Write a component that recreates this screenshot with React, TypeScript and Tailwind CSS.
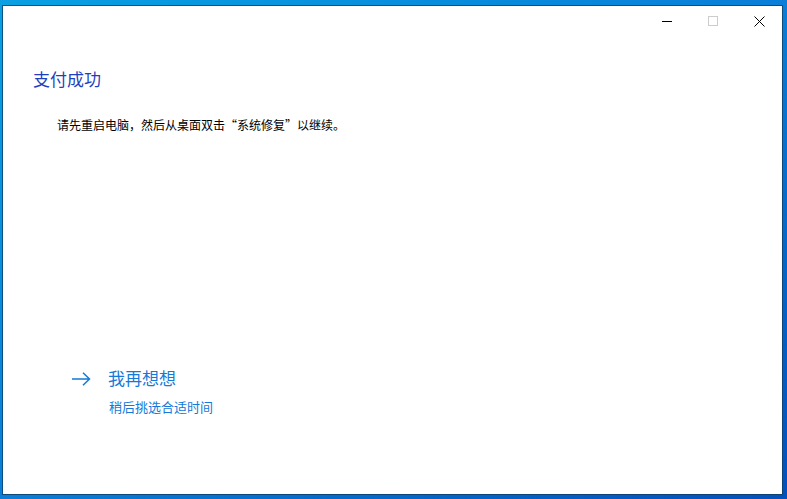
const cjk = { fontFamily: '"Noto Sans CJK SC", "Noto Sans", sans-serif' };

export default function App() {
  return (
    <div
      className="w-[787px] h-[499px] overflow-hidden bg-gradient-to-br from-[#0aa0e2] via-[#0a7ed8] to-[#0450bc] pl-[2px] pt-[5px]"
      style={cjk}
    >
      <div className="w-[781px] h-[490px] border border-[#0f3f66]/80 bg-white bg-clip-padding flex flex-col">
        {/* title bar */}
        <div className="h-[30px] flex justify-end">
          <button className="w-[46px] h-full flex items-center justify-center text-black">
            <svg width="10" height="10" viewBox="0 0 10 10">
              <path d="M0 5.5h10" stroke="currentColor" strokeWidth="1" />
            </svg>
          </button>
          <button className="w-[46px] h-full flex items-center justify-center text-[#cccccc]">
            <svg width="10" height="10" viewBox="0 0 10 10">
              <rect x="0.5" y="0.5" width="9" height="9" fill="none" stroke="currentColor" strokeWidth="1" />
            </svg>
          </button>
          <button className="w-[46px] h-full flex items-center justify-center text-black">
            <svg width="11" height="11" viewBox="0 0 11 11">
              <path d="M0.5 0.5l10 10M10.5 0.5l-10 10" stroke="currentColor" strokeWidth="1" />
            </svg>
          </button>
        </div>

        {/* content */}
        <div className="flex-1 flex flex-col pl-[30px]">
          <h1 className="mt-[31px] text-[17px] leading-[24px] text-[#1f3fbf]">支付成功</h1>
          <p className="mt-[25px] ml-[24px] text-[12px] leading-[18px] text-black">
            请先重启电脑，然后从桌面双击“系统修复”以继续。
          </p>

          <div className="mt-[231px] ml-[39px] flex items-start gap-[17px] text-[#1479d8]">
            <svg width="19" height="14" viewBox="0 0 19 14" className="mt-[7px]">
              <path d="M0 7h17.5M11 0.7l6.5 6.3-6.5 6.3" fill="none" stroke="currentColor" strokeWidth="1.5" />
            </svg>
            <div className="flex flex-col">
              <span className="text-[17px] leading-[26px]">我再想想</span>
              <span className="mt-[7px] text-[13px] leading-[18px] ml-[1px]">稍后挑选合适时间</span>
            </div>
          </div>
        </div>
      </div>
    </div>
  );
}
